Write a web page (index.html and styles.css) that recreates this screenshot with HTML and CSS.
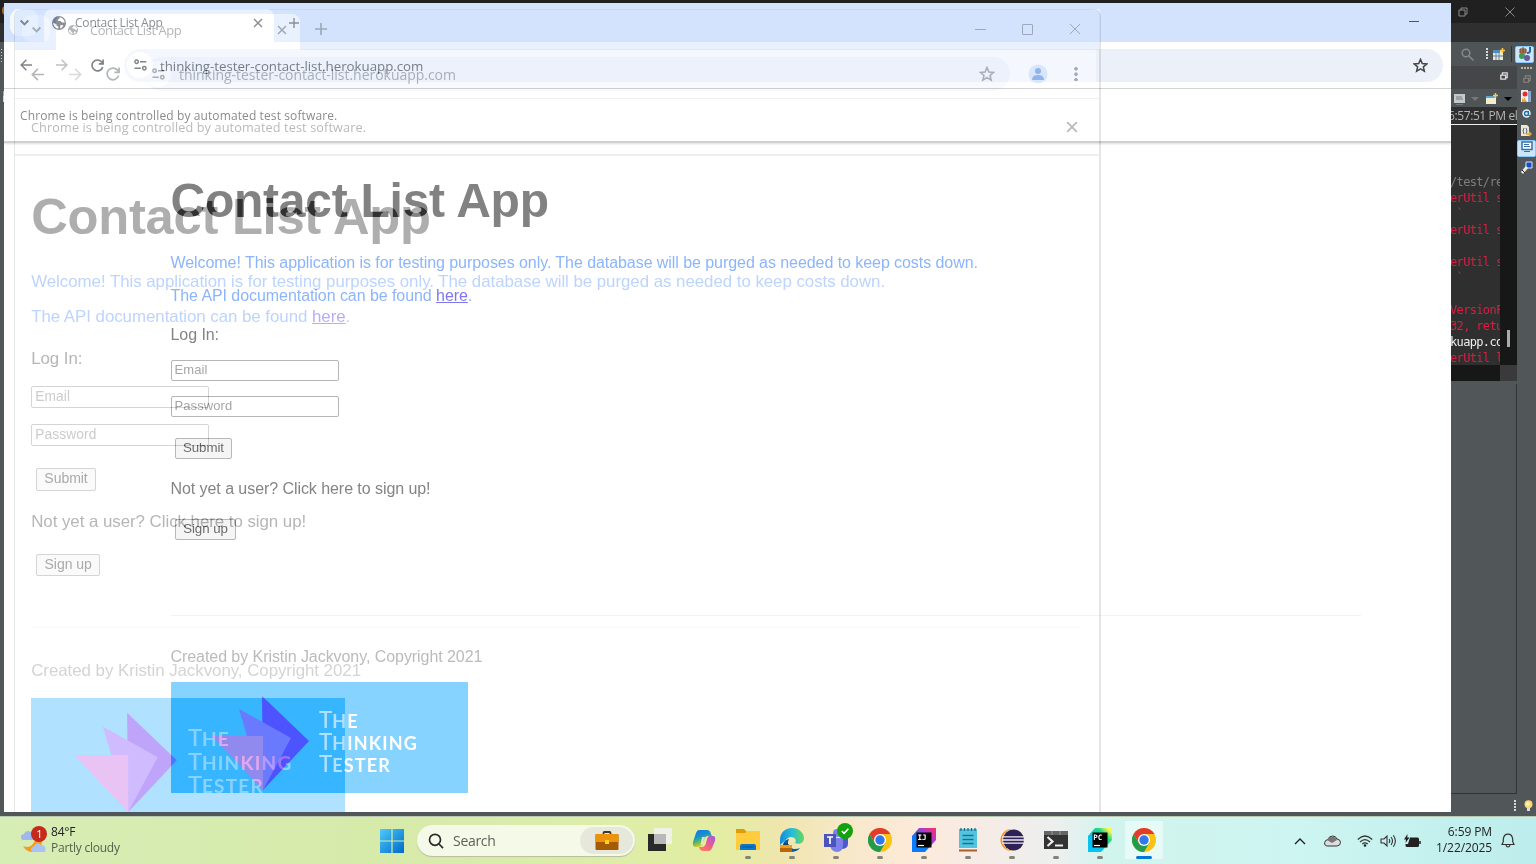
FILE: index.html
```html
<!DOCTYPE html>
<html lang="en">
<head>
<meta charset="utf-8">
<title>Contact List App</title>
<link rel="stylesheet" href="styles.css">
</head>
<body>
<svg class="defs" width="0" height="0">
  <symbol id="chev" viewBox="0 0 10 10"><path d="M1.5 3.2 5 6.8l3.500-3.600" fill="none" stroke="currentColor" stroke-width="1.700"/></symbol>
  <symbol id="globe" viewBox="0 0 14 14"><circle cx="7" cy="7" r="7" fill="currentColor"/><path d="M7.500 1.200c2.700.2 5 2.500 5.300 5.300H10L8.500 5H6.300l-.7-1.300 1.900-.9zM1.200 6.700l3.300 1.500v1.600l1.800.8v2C3.200 12.300 1.200 9.800 1.200 6.700zM8.500 9h2l.8 1-2 2.200H8.100z" fill="#fff"/></symbol>
  <symbol id="x" viewBox="0 0 10 10"><path d="m1 1 8 8M9 1 1 9" fill="none" stroke="currentColor" stroke-width="1.500"/></symbol>
  <symbol id="plus" viewBox="0 0 10 10"><path d="M5 0v10M0 5h10" fill="none" stroke="currentColor" stroke-width="1.400"/></symbol>
  <symbol id="back" viewBox="0 0 12 12"><path d="M12 6H1.200M6.400.8 1.200 6l5.200 5.200" fill="none" stroke="currentColor" stroke-width="1.500"/></symbol>
  <symbol id="reload" viewBox="0 0 12 12"><path d="M10.800 7.300A5 5 0 1 1 9.800 2.700L11 4M11.200.4V4.500H7.200" fill="none" stroke="currentColor" stroke-width="1.500"/></symbol>
  <symbol id="tune" viewBox="0 0 13 12"><g fill="none" stroke="currentColor" stroke-width="1.500"><circle cx="2.600" cy="2.700" r="1.700"/><path d="M6 2.700h6.300M.5 9.300h6.300"/><circle cx="10.300" cy="9.300" r="1.700"/></g></symbol>
  <symbol id="star" viewBox="0 0 14 14"><path d="m7 1.300 1.650 3.900 4.200.35-3.200 2.750.97 4.100L7 10.200l-3.620 2.200.97-4.100-3.200-2.750 4.200-.35z" fill="none" stroke="currentColor" stroke-width="1.400"/></symbol>
  <symbol id="logo" viewBox="0 0 297 111"><path class="l1" d="M91 14 138 59 92 108z"/><path class="l2" d="m68 27 52 29-28 52z"/><path class="l3" d="M41 54h51v54z"/></symbol>
  <symbol id="chrome" viewBox="0 0 24 24"><circle cx="12" cy="12" r="12" fill="#fbc116"/><path d="M1.600 6A12 12 0 0 1 22.400 6H12L6.800 15z" fill="#e33b2e"/><path d="M1.600 6A12 12 0 0 0 12 24l5.200-9H6.800z" fill="#229b4b"/><circle cx="12" cy="12" r="6" fill="#fff"/><circle cx="12" cy="12" r="4.700" fill="#2f78ed"/></symbol>
  <symbol id="restore" viewBox="0 0 10 10"><path d="M3 3V1h6v6H7M1 3h6v6H1z" fill="none" stroke="currentColor"/></symbol>
</svg>

<div class="desktop">
  <div class="ide-left"><i class="o"></i><i class="d"></i><i class="w"></i></div>

  <aside class="ide">
    <div class="ide-title"><svg width="10" height="10"><use href="#restore"/></svg><svg width="10" height="10" viewBox="0 0 10 10"><path d="m.5.5 9 9M9.500.5l-9 9" stroke="currentColor" fill="none"/></svg></div>
    <div class="ide-menu"></div>
    <div class="ide-tools">
      <svg width="13" height="13" viewBox="0 0 13 13"><g fill="none" stroke="#858989" stroke-width="1.500"><circle cx="5" cy="5" r="3.800"/><path d="m8 8 4.500 4.500"/></g></svg>
      <i class="grip"></i>
      <svg width="12" height="12" viewBox="0 0 12 12"><path d="M0 2h10v10H0z" fill="#f1ead1"/><path d="M0 2h7v3H0z" fill="#4d8dc4"/><path d="M3 5v7M0 8h10M6 5v7" stroke="#5586ab"/><path d="M9.500 0v5M7 2.500h5" stroke="#ffc84a" stroke-width="1.500"/></svg>
      <i class="sep"></i>
      <b class="tile"><svg width="14" height="14" viewBox="0 0 14 14"><path d="M2 2h6v4H2zM5 0v8M2 4h6" fill="#d99b67" stroke="#79462b"/><path d="M12 0v4q0 2-3 2" fill="none" stroke="#2766a8" stroke-width="2"/><circle cx="4" cy="9" r="3" fill="#3f9957"/><circle cx="9" cy="11" r="3" fill="#6656a5"/></svg></b>
    </div>
    <div class="ide-body">
      <div class="ide-main">
        <div class="ide-tabs"><svg width="8" height="8" viewBox="0 0 10 10"><path d="M3 3V1h6v6H7M1 4h6v5H1z" fill="none" stroke="#ddd" stroke-width="1.600"/></svg></div>
        <div class="ide-bar">
          <svg width="11" height="11" viewBox="0 0 11 11"><path d="M0 0h11v9H0z" fill="#c5c9ca"/><path d="M2 3h6M2 5h7M2 10.500h7" stroke="#747a7b"/></svg>
          <i class="tri dim"></i>
          <svg width="12" height="12" viewBox="0 0 12 12"><path d="M0 3h10v8H0z" fill="#f3edcf"/><path d="M0 3h10v2H0z" fill="#5ba3d3"/><path d="M9.500 0v5M7 2.500h5" stroke="#ffc84a" stroke-width="1.500"/></svg>
          <i class="tri"></i>
        </div>
        <div class="ide-time">6:57:51 PM el</div>
        <div class="console"><pre><span class="g">/test/re</span>
erUtil s
<span class="t"> `</span>
erUtil s

erUtil s
<span class="t"> `</span>

VersionF
32, retu
<span class="wh">kuapp.co</span>
erUtil l</pre><div class="track"><i></i></div></div>
        <div class="hscroll"><i></i></div>
        <div class="panel"></div>
      </div>
      <div class="ide-side">
        <i class="hd"></i>
        <svg width="8" height="8" viewBox="0 0 10 10"><path d="M3 3V1h6v6H7M1 4h6v5H1z" fill="none" stroke="#8d8480" stroke-width="1.400"/></svg>
        <svg width="11" height="13" viewBox="0 0 11 13"><path d="M0 0h7v12H0z" fill="#f3eee8"/><path d="M7 1h3v11H7" fill="#8ba9cf"/><circle cx="4" cy="4" r="2.500" fill="#e62b35"/><path d="M1 12V8l2 2V7l3 5z" fill="#e9a14b"/></svg>
        <svg width="9" height="9" viewBox="0 0 9 9"><circle cx="4.500" cy="4.500" r="4.200" fill="#e3f1fb"/><circle cx="4.500" cy="4.500" r="2" fill="none" stroke="#246fa5" stroke-width="1.500"/><path d="M6.500 2v4.500h2" fill="none" stroke="#246fa5"/></svg>
        <svg width="11" height="12" viewBox="0 0 11 12"><path d="M0 0h6l2 2v9H0z" fill="#eee6d0"/><path d="M3 3Q1 6 3 9M5 3q2 3 0 6" fill="none" stroke="#4c6785"/><path d="M5 9h5M8 7l2 2-2 2" fill="none" stroke="#e4a631" stroke-width="1.500"/></svg>
        <b class="tile"><svg width="12" height="12" viewBox="0 0 12 12"><path d="M1 1h10v7.500H1z" fill="#fff" stroke="#386fa5" stroke-width="1.500"/><path d="M3 3.500h5M3 5.500h6M3 10.500h6" stroke="#386fa5"/></svg></b>
        <svg width="12" height="13" viewBox="0 0 12 13"><path d="M5 1h6v6H5z" fill="#144bd2" stroke="#dce8f2"/><path d="m1 12 5-6" stroke="#ece9d8" stroke-width="3"/><path d="m1 9 3 3" stroke="#222"/></svg>
      </div>
    </div>
    <div class="ide-foot"><i class="grip"></i><svg width="9" height="12" viewBox="0 0 9 12"><circle cx="4.500" cy="4.200" r="4" fill="#ffd56c"/><circle cx="4" cy="4" r="2" fill="#fff3b4"/><path d="M3 8h3v3H3z" fill="#d9dde2"/></svg></div>
  </aside>

  <section class="win win-a">
    <div class="strip">
      <div class="tabsearch"><svg width="11" height="11"><use href="#chev"/></svg></div>
      <div class="tab"><svg class="globe" width="14" height="14"><use href="#globe"/></svg><span>Contact List App</span><svg class="tx" width="10" height="10"><use href="#x"/></svg></div>
      <svg class="plus" width="10" height="10"><use href="#plus"/></svg>
      <i class="min"></i>
    </div>
    <div class="toolbar">
      <svg class="bk" width="12" height="12"><use href="#back"/></svg>
      <svg class="fw" width="12" height="12"><use href="#back"/></svg>
      <svg class="rl" width="13" height="13"><use href="#reload"/></svg>
      <div class="omni"><b class="site"><svg width="13" height="12"><use href="#tune"/></svg></b><span class="url">thinking-tester-contact-list.herokuapp.com</span><svg class="star" width="15" height="15"><use href="#star"/></svg></div>
    </div>
    <div class="infobar"><span>Chrome is being controlled by automated test software.</span></div>
    <main class="page">
      <h1>Contact List App</h1>
      <p class="intro">Welcome! This application is for testing purposes only. The database will be purged as needed to keep costs down.</p>
      <p class="api">The API documentation can be found <a>here</a>.</p>
      <p class="login">Log In:</p>
      <div class="field">Email</div>
      <div class="field">Password</div>
      <div class="btn submit">Submit</div>
      <p class="not">Not yet a user? Click here to sign up!</p>
      <div class="btn signup">Sign up</div>
      <hr>
      <p class="created">Created by Kristin Jackvony, Copyright 2021</p>
      <div class="brand"><svg class="mark"><use href="#logo"/></svg><div class="words"><b>T</b>HE<br><b>T</b>HINKING<br><b>T</b>ESTER</div></div>
    </main>
  </section>

  <section class="win win-b">
    <div class="strip">
      <div class="tabsearch"><svg width="11" height="11"><use href="#chev"/></svg></div>
      <div class="tab"><svg class="globe" width="10" height="10"><use href="#globe"/></svg><span>Contact List App</span><svg class="tx" width="10" height="10"><use href="#x"/></svg></div>
      <svg class="plus" width="12" height="12"><use href="#plus"/></svg>
      <div class="ctl"><i class="min"></i><i class="max"></i><svg width="12" height="12" viewBox="0 0 12 12"><path d="m1 1 10 10M11 1 1 11" stroke="currentColor" fill="none"/></svg></div>
    </div>
    <div class="toolbar">
      <svg class="bk" width="13" height="13"><use href="#back"/></svg>
      <svg class="fw" width="13" height="13"><use href="#back"/></svg>
      <svg class="rl" width="14" height="14"><use href="#reload"/></svg>
      <div class="omni"><b class="site"><svg width="13" height="12"><use href="#tune"/></svg></b><span class="url">thinking-tester-contact-list.herokuapp.com</span><svg class="star" width="16" height="16"><use href="#star"/></svg></div>
      <svg class="user" width="20" height="20" viewBox="0 0 20 20"><circle cx="10" cy="10" r="9.500" fill="#e3eefd"/><circle cx="10" cy="7" r="3" fill="#9dbcee"/><path d="M4 16q0-5 6-5t6 5z" fill="#9dbcee"/></svg>
      <i class="dots"></i>
    </div>
    <div class="infobar"><span>Chrome is being controlled by automated test software.</span><svg width="12" height="12"><use href="#x"/></svg></div>
    <main class="page">
      <h1>Contact List App</h1>
      <p class="intro">Welcome! This application is for testing purposes only. The database will be purged as needed to keep costs down.</p>
      <p class="api">The API documentation can be found <a>here</a>.</p>
      <p class="login">Log In:</p>
      <div class="field">Email</div>
      <div class="field">Password</div>
      <div class="btn submit">Submit</div>
      <p class="not">Not yet a user? Click here to sign up!</p>
      <div class="btn signup">Sign up</div>
      <hr>
      <p class="created">Created by Kristin Jackvony, Copyright 2021</p>
      <div class="brand"><svg class="mark"><use href="#logo"/></svg><div class="words"><b>T</b>HE<br><b>T</b>HINKING<br><b>T</b>ESTER</div></div>
    </main>
  </section>

  <footer class="taskbar">
    <div class="weather">
      <svg width="30" height="30" viewBox="0 0 30 30"><path d="M21 13a9 9 0 1 1-18 8q9 4 13-8z" fill="#f59a20"/><path d="M2 15q-3-5 2-6 2-5 7-2 5 1 4 8z" fill="#9eb9ea"/><path d="M12 27q-3-4 2-6 3-5 7-1 6 0 4 7z" fill="#a9c3f2"/><circle cx="19" cy="9" r="8" fill="#c42b1c"/><text x="16.300" y="13" font-size="11" fill="#fff">1</text></svg>
      <div><span class="temp">84°F</span><span class="cond">Partly cloudy</span></div>
    </div>
    <svg class="start" width="24" height="24" viewBox="0 0 24 24"><defs><linearGradient id="wg" x2="1" y2="1" gradientUnits="userSpaceOnUse" x1="0" y1="0" gradientTransform="scale(24)"><stop stop-color="#4ccbfa"/><stop offset="1" stop-color="#0069ca"/></linearGradient></defs><path d="M0 0h11.400v11.400H0zM12.600 0H24v11.400H12.600zM0 12.600h11.400V24H0zM12.600 12.600H24V24H12.600z" fill="url(#wg)"/></svg>
    <div class="search"><svg width="16" height="16" viewBox="0 0 16 16"><g fill="none" stroke="#282c2c" stroke-width="1.700"><circle cx="7" cy="6.800" r="5.500"/><path d="m11 11 4 4.200"/></g></svg><span>Search</span><b><svg width="24" height="20" viewBox="0 0 24 20"><path d="M8.500 3.500V2q0-1 1-1h5q1 0 1 1v1.500" fill="none" stroke="#3c3835" stroke-width="1.800"/><rect x=".5" y="3" width="23" height="16" rx="1" fill="#a55a06"/><path d="M.5 4q0-1 1-1h21q1 0 1 1v7H.5z" fill="#ec930b"/><path d="M10 9h4v4h-4z" fill="#ffd21c"/></svg></b></div>
    <div class="apps">
      <div class="app off"><svg viewBox="0 0 24 24"><path d="M0 6h18v17H0z" fill="#292929"/><path d="M6 0h18v16H6z" fill="#f1f1f1" opacity=".9"/><path d="M6 6h12v10H6z" fill="#b8b8b8"/></svg></div>
      <div class="app off"><svg viewBox="0 0 24 24"><defs><linearGradient id="c1" x2=".4" y2="1"><stop stop-color="#1672df"/><stop offset=".45" stop-color="#1593d0"/><stop offset=".7" stop-color="#5cb85c"/><stop offset="1" stop-color="#f3cd29"/></linearGradient><linearGradient id="c2" x1="1" y1="0" x2="0" y2="1"><stop stop-color="#9a5bf0"/><stop offset=".5" stop-color="#f05d88"/><stop offset="1" stop-color="#ff8a4c"/></linearGradient></defs><path d="M7 2h8q3 0 4 4l1 2h-4q-3 0-4 4l-2 5q-1 2-4 2H4q-4 0-3-5L4 5q1-3 3-3z" fill="url(#c1)"/><path d="M17 8h4q3 0 2 5l-3 7q-1 3-4 3h-5q-3 0-4-4h3q3 0 4-4l1-4q1-3 2-3z" fill="url(#c2)"/><path d="m10 9-1.500 8q2 0 3-4l1.500-4z" fill="#fff" opacity=".7"/></svg></div>
      <div class="app"><svg viewBox="0 0 24 24"><path d="M0 1h8l3 3h12v8H0z" fill="#df9b09"/><path d="M0 5h9l3-2h12v19H0z" fill="#ffcc3d"/><path d="M4 22v-4q0-2 2-2h12q2 0 2 2v4z" fill="#0879ca"/><path d="M6 19h12" stroke="#06509b"/></svg></div>
      <div class="app"><svg viewBox="0 0 24 24"><defs><linearGradient id="e1"><stop stop-color="#148bd8"/><stop offset=".5" stop-color="#27bcdb"/><stop offset="1" stop-color="#67d957"/></linearGradient></defs><path d="M0 12C0 4 6 0 12 0c7 0 12 5 12 10 0 5-5 7-9 5 3-4-3-8-7-5L0 17z" fill="url(#e1)"/><path d="M9 11c-4 8 4 12 11 9-3 5-14 6-17-2 0-4 2-6 6-7z" fill="#095aa5"/><path d="M0 17h12v7H0z" fill="#ba6708"/><path d="M0 17h12v3H0z" fill="#ee9c1c"/><path d="M4 17v-1h4v1" stroke="#333" fill="none"/></svg></div>
      <div class="app"><svg viewBox="0 0 24 24"><circle cx="21" cy="9" r="3" fill="#5059c9"/><circle cx="13" cy="5" r="4" fill="#7b83eb"/><path d="M16 10h8v6q0 5-7 5z" fill="#5059c9"/><path d="M6 10h13v7q0 7-6 7t-7-7z" fill="#7b83eb"/><path d="M0 6h12v13H0z" fill="#4b53bc"/><path d="M3 9h6M6 9v7" stroke="#fff" stroke-width="1.700"/></svg><i class="ok"><svg viewBox="0 0 16 16"><circle cx="8" cy="8" r="8" fill="#13a10e"/><path d="m4.800 8 2.300 2.300 4.300-4.500" fill="none" stroke="#fff" stroke-width="1.600"/></svg></i></div>
      <div class="app"><svg><use href="#chrome"/></svg></div>
      <div class="app"><svg viewBox="0 0 24 24"><defs><linearGradient id="ij" x1="0" y1="1" x2="1" y2="0"><stop offset=".35" stop-color="#087cfa"/><stop offset=".7" stop-color="#b638c8"/><stop offset="1" stop-color="#ff315d"/></linearGradient></defs><path d="M7 0h17v12l-11 12H0V8z" fill="url(#ij)"/><path d="M4.500 4.500h15v15h-15z"/><text x="5.500" y="12" class="jb">IJ</text><path d="M6 17.500h6" stroke="#fff" stroke-width="1.200"/></svg></div>
      <div class="app"><svg viewBox="0 0 24 24"><path d="M3 1h18v20H3z" fill="#52c4df"/><path d="M3 21h18v2.500H3z" fill="#a95e2d"/><path d="M3 20h18v1.500H3z" fill="#f4eee6"/><path d="M5 0v3M8.500 0v3M12 0v3M15.500 0v3M19 0v3" stroke="#126c8b" stroke-width="1.300"/><path d="M6.500 7.500h11M6.500 11.500h11M6.500 15.500h11" stroke="#147397" stroke-width="1.500"/></svg></div>
      <div class="app"><svg viewBox="0 0 24 24"><circle cx="11.500" cy="12" r="11" fill="#f7941e"/><circle cx="13.500" cy="12" r="11" fill="#f8ead7"/><circle cx="13.500" cy="12" r="10.500" fill="#2c2255"/><path d="M2 8.800h22M2 12h22M2 15.200h22" stroke="#f0edf6" stroke-width="1.300"/></svg></div>
      <div class="app"><svg viewBox="0 0 24 24"><path d="M0 3h24v18H0z" fill="#333"/><path d="M0 3h24v4H0z" fill="#656565"/><path d="M8 3v4M16 3v4" stroke="#999"/><path d="m3.500 9 5 4.500-5 4.500" fill="none" stroke="#eee" stroke-width="2.200"/><path d="M11 17.500h8" stroke="#eee" stroke-width="2"/></svg></div>
      <div class="app"><svg viewBox="0 0 24 24"><defs><linearGradient id="pc" x1="0" y1="1" x2="1" y2="0"><stop offset=".35" stop-color="#07c3f2"/><stop offset=".7" stop-color="#21d789"/><stop offset=".9" stop-color="#fcf84a"/></linearGradient></defs><path d="M7 0h17v12l-11 12H0V8z" fill="url(#pc)"/><path d="M4.500 4.500h15v15h-15z"/><text x="5.300" y="12" class="jb">PC</text><path d="M6 17.500h6" stroke="#fff" stroke-width="1.200"/></svg></div>
      <div class="app active"><svg><use href="#chrome"/></svg></div>
    </div>
    <div class="tray">
      <svg width="12" height="8" viewBox="0 0 12 8"><path d="m1 7 5-5 5 5" fill="none" stroke="#222" stroke-width="1.400"/></svg>
      <svg width="17" height="12" viewBox="0 0 17 12"><path d="M4 11q-4 0-3.300-3.500Q1 5 4 4.500 5 1 8.500 1 12 1 13 4q3.500.5 3.500 3.500T13 11z" fill="#ddd" stroke="#333"/><path d="M3 5q2-4 6-3.500Q12 2 13 5L8 8z" fill="#777"/></svg>
      <svg width="16" height="12" viewBox="0 0 16 12"><g fill="none" stroke="#333" stroke-width="1.200"><path d="M.8 4.500q7.200-7 14.400 0M3 7q5-4.800 10 0M5.300 9q2.700-2.400 5.400 0"/></g><circle cx="8" cy="10.500" r="1.300" fill="#222"/></svg>
      <svg width="17" height="14" viewBox="0 0 17 14"><g fill="none" stroke="#333" stroke-width="1.100"><path d="M1 5h3l3-3v10L4 9H1zM9 5q1.500 2 0 4M11 3q3 4 0 8M13.300 1.200q4.200 5.800 0 11.600"/></g></svg>
      <svg width="17" height="14" viewBox="0 0 17 14"><path d="M6 3.500h7.500q1.500 0 1.500 1.500v6.500q0 1.500-1.500 1.500H3q-1.500 0-1.500-1.500V10H4z" fill="#222"/><path d="M16 7v3" stroke="#222" stroke-width="1.500"/><path d="M3.500 0 0 5.500h2L1.500 9l4-5.500H3.300z" fill="#222"/></svg>
      <div class="clock">6:59 PM<br>1/22/2025</div>
      <svg width="14" height="15" viewBox="0 0 14 15"><path d="M1 11.500h12l-1.300-2.800V6Q11 1.200 7 1.200T2.300 6v2.700zM5 12q.5 2 2 2t2-2" fill="none" stroke="#333" stroke-width="1.200"/></svg>
    </div>
  </footer>
</div>
</body>
</html>
```

FILE: styles.css
```css
* { box-sizing: border-box; }
body { margin: 0; overflow: hidden; font-family: "Open Sans", "Noto Sans", sans-serif; }
svg { display: block; flex: none; }
.defs { position: absolute; }
h1, p, hr, pre { margin: 0; }

.desktop { position: relative; width: 1536px; height: 864px; background: #515658; display: flex; flex-direction: column; overflow: hidden; isolation: isolate; background-image: linear-gradient(#202020 23px, #2f2f2f 23px, #2f2f2f 42px, transparent 42px); }

/* left sliver of the editor behind the browser */
.ide-left { width: 4px; height: 816px; padding-top: 6px; }
.ide-left i { display: block; width: 3px; }
.ide-left .o { height: 9px; width: 4px; background: #a96420; border-radius: 6px 0 0 6px; margin-left: 2px; }
.ide-left .d { height: 13px; margin: 34px 0 0 1px; width: 1px; background: repeating-linear-gradient(#ccc 0 1px, transparent 1px 3px); }
.ide-left .w { height: 11px; margin: 29px 0 0 3px; background: #ded3bd; border-top: 5px solid #dda23b; }

/* right part of the editor */
.ide { position: absolute; left: 1451px; top: 0; width: 85px; height: 816px; display: flex; flex-direction: column; }
.ide-title { height: 23px; display: flex; gap: 37px; padding-left: 7px; align-items: center; color: #8a8a8a; background: #202020; }
.ide-menu { height: 19px; background: #2f2f2f; }
.ide-tools { height: 24px; display: flex; align-items: center; padding-left: 10px; background: #4f5557; }
.grip { width: 2px; height: 12px; background: repeating-linear-gradient(#d8d8d8 0 2px, transparent 2px 3px); }
.ide-tools .grip { margin: 0 5px 0 12px; }
.sep { width: 1px; height: 16px; background: #333; margin-left: 6px; }
.tile { display: grid; place-items: center; width: 19px; height: 17px; background: #cbe6fb; border: 1px solid #8cc8f5; border-radius: 2px; flex: none; }
.ide-tools .tile { margin-left: 3px; }
.ide-body { display: flex; height: 728px; }
.ide-main { width: 66px; flex: none; }
.ide-tabs { height: 23px; background: #454648; padding: 6px 0 0 49px; }
.ide-bar { height: 18px; background: #4f5557; display: flex; align-items: center; padding: 2px 0 0 3px; gap: 7px; }
.tri { border: 4px solid transparent; border-top-color: #000; border-bottom: 0; margin-left: -1px; }
.tri.dim { border-top-color: #777; }
.ide-time { height: 18px; background: #2f2f2f; color: #b4b4b4; font: 12px/17px "Open Sans", sans-serif; letter-spacing: -.4px; white-space: nowrap; overflow: hidden; border-bottom: 1px solid #eee; text-indent: -3px; }
.console { display: flex; height: 240px; background: #2f2f2f; overflow: hidden; }
.console pre { width: 50px; margin-left: -1px; overflow: hidden; padding-top: 49px; font: 12px/16px "DejaVu Sans Mono", monospace; letter-spacing: -.65px; color: #d81f41; }
.console .g { color: #7f7f7f; }
.console .wh { color: #eee; }
.track { width: 17px; background: #171717; padding: 205px 0 0 7px; }
.track i { display: block; width: 3px; height: 17px; background: #aaa; }
.hscroll { display: flex; justify-content: flex-end; height: 16px; background: #171717; }
.hscroll i { width: 17px; background: #3a3a3a; }
.panel { height: 410px; margin-top: 3px; border: solid #323435; border-width: 0 1px 1px 0; }
.ide-side { width: 19px; display: flex; flex-direction: column; align-items: center; }
.hd { width: 12px; height: 2px; margin: 1px 0 6px; background: repeating-linear-gradient(90deg, #bbb49f 0 2px, transparent 2px 3px); }
.ide-side svg:nth-of-type(1) { margin-bottom: 7px; }
.ide-side svg:nth-of-type(2) { margin-bottom: 6px; }
.ide-side svg:nth-of-type(3) { margin-bottom: 7px; }
.ide-side svg:nth-of-type(4) { margin-bottom: 3px; }
.ide-side > .tile { margin-bottom: 4px; }
.ide-foot { display: flex; align-items: center; gap: 8px; padding: 2px 0 0 63px; height: 22px; }

/* browser windows */
.win { position: absolute; overflow: hidden; background: #fff; }
.win-a { --u: 1px; left: 4px; top: 3px; width: 1447px; height: 809px; color: #7f8388; }
.win-b { --u: 1.056px; left: 14px; top: 9px; width: 1087px; height: 803px; color: #b3b6b9; border: solid #e6e6e6; border-width: 1px 2px 0 1px; border-radius: 8px 8px 0 0; filter: invert(1); mix-blend-mode: difference; }
.strip { display: flex; align-items: flex-start; }
.tab { display: flex; align-items: center; background: #fff; white-space: nowrap; flex: none; }
.tab .tx { margin-left: auto; }
.toolbar { display: flex; align-items: center; position: relative; background: #fff; }
.omni { display: flex; align-items: center; flex: none; white-space: nowrap; }
.site { display: grid; place-items: center; background: #fff; border-radius: 50%; flex: none; }
.star { margin-left: auto; }
.fw { transform: scaleX(-1); opacity: .5; }
.min { height: 1px; background: currentColor; }

.win-a .strip { height: 39px; color: #8b8f95; background: linear-gradient(90deg, #d3e2fd 11px, #e9f1fe 11px, #e9f1fe 1096px, #d3e2fd 1096px) 0 6px no-repeat #d3e2fd; }
.win-a .tabsearch { width: 28px; height: 27px; margin: 6px 6px 0 6px; background: #f4f8ff; border-radius: 9px; padding: 8px 9px; }
.win-a .tab { width: 230px; height: 33px; margin: 6px 0 0 0; border-radius: 8px 8px 0 0; padding: 0 11px 6px 8px; font-size: 12px; }
.win-a .tab span { margin-left: 9px; letter-spacing: -.2px; }
.win-a .plus { margin: 15px 0 0 15px; }
.win-a .strip .min { width: 10px; margin: 18px 32px 0 auto; height: 1px; background: #555; }
.win-a .toolbar { height: 47px; padding-left: 16px; border-bottom: 1px solid #d3d3d3; }
.win-a .fw { margin-left: 24px; }
.win-a .rl { margin-left: 23px; }
.win-a .omni { margin-left: 20px; width: 1319px; height: 33px; border-radius: 17px; background: linear-gradient(90deg, #f4f7fd 972px, #ecf0f9 972px); padding: 0 15px 0 3px; }
.win-a .site { width: 26px; height: 26px; }
.win-a .url { margin-left: 7px; font-size: 13.300px; padding-top: 1px; letter-spacing: -.02px; }
.win-a .star { color: #444; }
.win-a .infobar { height: 54px; padding: 1px 0 0 16px; display: flex; align-items: center; font-size: 12px; letter-spacing: .11px; border-bottom: 2px solid #d0d0d0; box-shadow: 0 1px 2px #ddd; color: #8c8c8c; }

.win-b .strip { height: 40px; background: #e9f1fe; border-radius: 7px 7px 0 0; }
.win-b .tabsearch { width: 28px; height: 27px; margin: 5px 6px 0 7px; border-radius: 9px; background: #f2f7ff; padding: 9px; }
.win-b .tab { width: 244px; height: 36px; margin-top: 4px; border-radius: 8px 8px 0 0; padding: 0 13px 5px 12px; font-size: 13px; }
.win-b .tab span { margin-left: 12px; letter-spacing: -.45px; }
.win-b .plus { margin: 13px 0 0 15px; }
.ctl { display: flex; align-items: center; margin: 13px 18px 0 auto; gap: 36px; }
.ctl .min { width: 11px; }
.max { width: 11px; height: 11px; border: 1px solid currentColor; border-radius: 1px; }
.win-b .toolbar { height: 49px; padding-left: 16px; border-bottom: 1px solid #efefef; }
.win-b .fw { margin-left: 25px; }
.win-b .rl { margin-left: 24px; }
.win-b .omni { margin: 0 0 1px 25px; width: 865px; height: 34px; border-radius: 17px; background: #f7f9fd; padding: 0 15px 0 0; }
.win-b .site { width: 26px; height: 26px; }
.win-b .url { margin-left: 8px; font-size: 14px; letter-spacing: -.03px; padding-top: 1px; }
.user { margin-left: 18px; }
.dots { width: 4px; height: 15px; margin: 0 0 2px 26px; background: radial-gradient(circle 1.600px, currentColor 1.600px, transparent 2px) 0 0 / 4px 5.500px; }
.win-b .infobar { height: 57px; padding: 1px 21px 0 16px; display: flex; align-items: center; justify-content: space-between; font-size: 12.700px; letter-spacing: .11px; border-bottom: 2px solid #efefef; color: #bababa; }

/* page content, scaled by --u */
.page { font-family: "Liberation Sans", Arial, sans-serif; font-size: calc(var(--u) * 16); white-space: nowrap; color: #848484; letter-spacing: -.062px; }
.win-a .page { padding: 27.500px 90px 0 166.500px; }
.win-b .page { padding: 30px 18px 0 16.200px; color: #b6b6b6; letter-spacing: -.045px; }
h1 { font-size: calc(var(--u) * 48); line-height: calc(var(--u) * 60); height: calc(var(--u) * 60); color: #828282; letter-spacing: -.25px; }
.win-b h1 { color: #aeaeae; letter-spacing: -.25px; line-height: calc(var(--u) * 58); }
.intro, .api { line-height: calc(var(--u) * 33); height: calc(var(--u) * 33); color: #8cb5fb; }
.win-b .intro, .win-b .api { color: #bdd4fd; }
.intro { margin-top: calc(var(--u) * 15); }
a { text-decoration: underline; color: #7e78ef; }
.win-b a { color: #b8adf6; }
.login { line-height: calc(var(--u) * 45); height: calc(var(--u) * 44); }
.field { width: calc(var(--u) * 168.500); height: calc(var(--u) * 21); border: 1px solid #b5b5b5; border-radius: 2px; margin-top: calc(var(--u) * 4); padding-left: calc(var(--u) * 3); font-size: calc(var(--u) * 13); line-height: calc(var(--u) * 18); color: #a6a6a6; letter-spacing: .1px; }
.field + .field { margin-top: calc(var(--u) * 15.500); }
.win-b .field { border-color: #d5d5d5; color: #ccc; }
.btn { width: calc(var(--u) * 57); height: calc(var(--u) * 21); margin: calc(var(--u) * 21) 0 0 calc(var(--u) * 4.500); border: 1px solid #b8b8b8; border-radius: 2px; background: #f5f5f5; text-align: center; font-size: calc(var(--u) * 13.300); line-height: calc(var(--u) * 18.500); color: #6c6c6c; }
.win-b .btn { border-color: #d5d5d5; background: #fafafa; color: #aaa; }
.not { height: calc(var(--u) * 40); line-height: calc(var(--u) * 40); margin-top: calc(var(--u) * 10); }
.signup { width: calc(var(--u) * 61); margin-top: calc(var(--u) * 10); }
hr { border: 0; height: 1px; background: #f3f3f3; margin-top: 74.500px; }
.win-b hr { margin-top: 51px; background: #f7f7f7; }
.created { margin-top: calc(var(--u) * 24.500); height: calc(var(--u) * 33); line-height: calc(var(--u) * 33); color: #bbb; }
.win-b .created { color: #d4d4d4; }
.brand { display: flex; width: calc(var(--u) * 297.500); height: calc(var(--u) * 111); margin-top: calc(var(--u) * 8.500); background: #87d3ff; color: #fff; overflow: hidden; }
.win-b .brand { background: #b0e1ff; }
.mark { width: calc(var(--u) * 297); height: calc(var(--u) * 111); margin-right: calc(var(--u) * -148.500); }
.win-a .mark { --l1: #9b71ff; --l2: #b898ff; --l3: #dfa8ee; }
.win-b .mark { --l1: #bfa5f9; --l2: #d1bbff; --l3: #e9c3f4; }
.l1 { fill: var(--l1); } .l2 { fill: var(--l2); } .l3 { fill: var(--l3); }
.words { font-family: Lato, sans-serif; font-weight: 700; font-size: calc(var(--u) * 18); line-height: calc(var(--u) * 22.300); letter-spacing: calc(var(--u) * 1.150); padding-top: calc(var(--u) * 28); }
.words b { font-weight: 500; font-size: calc(var(--u) * 22.500); line-height: 1px; letter-spacing: -.2px; }

/* taskbar */
.taskbar { position: relative; height: 48px; display: flex; align-items: center; background: linear-gradient(90deg, #d6edb5 0, #d6eaaa 380px, #dcedaa 580px, #e3eda2 720px, #efe6ad 780px, #f8e8ca 850px, #fceadb 920px, #f4ece8 1000px, #ebf0ef 1060px, #d1f4ed 1110px, #cdf5f1 1300px, #bdedec 1536px); border-top: 1px solid #b9c8b0; color: #222; }
.weather { display: flex; width: 380px; padding-left: 20px; gap: 1px; }
.weather div { display: flex; flex-direction: column; margin-top: -1px; }
.temp, .cond { font-size: 12px; line-height: 16px; letter-spacing: -.2px; }
.cond { color: #56614b; letter-spacing: -.25px; }
.search { display: flex; align-items: center; width: 218px; height: 31px; margin: 0 3px 0 13px; border-radius: 16px; background: #f5f9e8; padding: 0 2px 0 11px; box-shadow: 0 1px 1px #b8bd9f; font-size: 14px; color: #5d6259; letter-spacing: -.3px; }
.search span { margin-left: 9px; }
.search b { margin-left: auto; width: 53px; height: 27px; border-radius: 14px; background: #e6e8dc; display: grid; place-items: center; }
.apps { display: flex; }
.app { position: relative; width: 44px; height: 47px; display: flex; flex-direction: column; align-items: center; padding-top: 11px; }
.app > svg { width: 24px; height: 24px; }
.app::after { content: ""; width: 6px; height: 3px; border-radius: 2px; background: #818476; margin-top: 4px; }
.app.off::after { display: none; }
.app.active::after { width: 16px; background: #0078d4; }
.app.active { background: linear-gradient(#e6faf7, #e6faf7) 3px 4px / 38px 38px no-repeat; }
.ok { position: absolute; left: 23px; top: 6px; width: 16px; height: 16px; }
.jb { font: bold 7.500px "DejaVu Sans Mono", monospace; fill: #fff; }
.tray { margin-left: auto; display: flex; align-items: center; padding-right: 21px; gap: 9px; }
.tray svg:nth-of-type(1) { margin-right: 9px; }
.tray svg:nth-of-type(2) { margin-right: 7px; }
.tray svg:nth-of-type(3), .tray svg:nth-of-type(4) { margin-right: -2px; }
.clock { font-size: 12px; line-height: 16px; text-align: right; letter-spacing: -.1px; margin: -2px 0 0 6px; }
```
